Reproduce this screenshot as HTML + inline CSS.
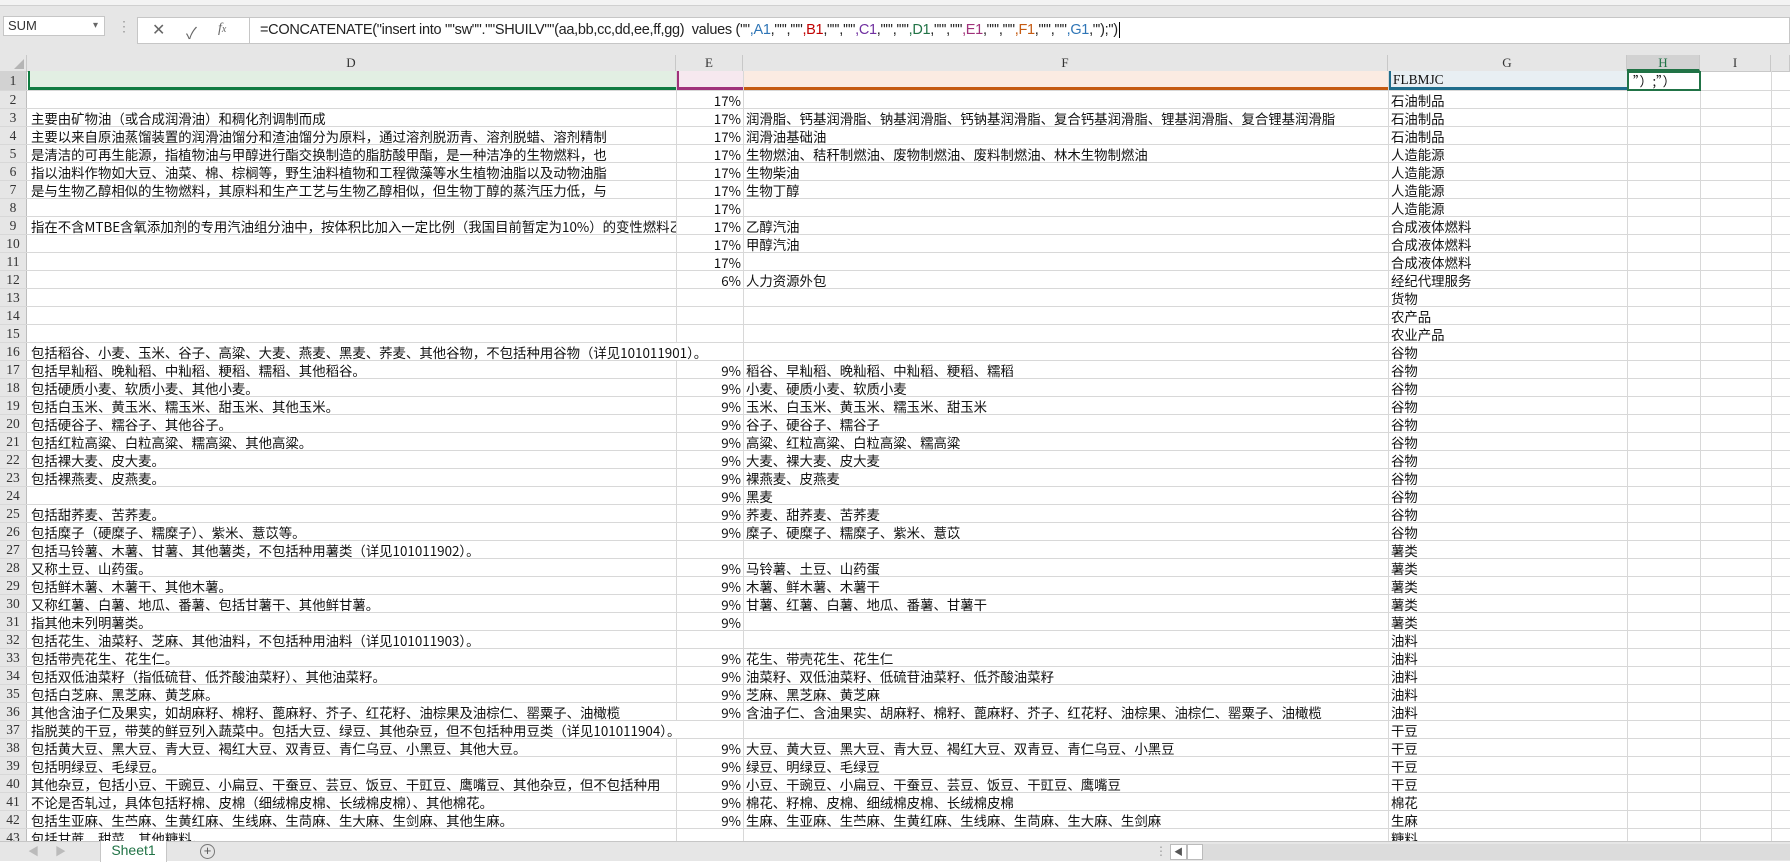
<!DOCTYPE html>
<html><head><meta charset="utf-8">
<style>
*{margin:0;padding:0;box-sizing:border-box}
body{width:1790px;height:861px;overflow:hidden;background:#fff;position:relative;font-family:"Liberation Sans","Noto Sans CJK SC",sans-serif}
.top{position:absolute;left:0;top:0;width:1790px;height:71px;background:#e6e6e6}
.rib{position:absolute;left:0;top:0;width:1790px;height:6px;background:#f3f3f3;border-bottom:1px solid #d0d0d0}
.nb{position:absolute;left:3px;top:16px;width:102px;height:20px;background:#fff;border:1px solid #c6c6c6;font-size:13px;line-height:18px;padding-left:4px;color:#333}
.nb:after{content:"▾";position:absolute;right:6px;top:0;font-size:10px;color:#666}
.ib{position:absolute;left:137px;top:17px;width:112px;height:27px;background:#fff;border:1px solid #c6c6c6;border-right:none;color:#666;font-size:16px}
.fb{position:absolute;left:249px;top:17px;width:1541px;height:27px;background:#fff;border:1px solid #c6c6c6;font-size:14.5px;line-height:25px;padding-left:10px;color:#222;white-space:nowrap;letter-spacing:-0.3px}
.grid{position:absolute;left:0;top:55px;width:1790px;height:786px;overflow:hidden}
.hdr{position:absolute;top:0;height:16px;font-family:"Liberation Serif","Noto Serif CJK SC",serif;font-size:13px;line-height:16px;text-align:center;color:#333;border-right:1px solid #c8c8c8;background:#e6e6e6}
.r{position:absolute;left:0;height:18px;width:1790px;font-family:"Noto Sans CJK SC",sans-serif;font-size:13.4px;line-height:18px;white-space:nowrap;color:#111;border-bottom:1px solid #d8d8d8}
.r span{position:absolute;top:0;height:17px;overflow:hidden}
.n{left:0;width:27px;background:#e6e6e6;text-align:center;font-family:"Liberation Serif",serif;font-size:13.5px;color:#333;border-right:1px solid #bdbdbd}
.d{left:28px;width:648px;padding-left:3px}
.dx{left:28px;padding-left:3px;overflow:visible!important;background:#fff;z-index:2}
.e{left:677px;width:66px;text-align:right;padding-right:2px}
.f{left:744px;width:644px;padding-left:2px}
.g{left:1389px;width:238px;padding-left:2px}
.vl{position:absolute;top:16px;width:1px;height:770px;background:#d8d8d8}
.tabs{position:absolute;left:0;top:841px;width:1790px;height:20px;background:#e6e6e6;border-top:1px solid #c6c6c6}
</style></head><body>
<div class="top"><div class="rib"></div>
<div class="nb">SUM</div>
<div style="position:absolute;left:117px;top:18px;color:#999;font-size:14px">⋮</div>
<div class="ib"><span style="position:absolute;left:14px;top:2px">✕</span><span style="position:absolute;left:48px;top:2px">✓</span><span style="position:absolute;left:80px;top:3px;font-family:'Liberation Serif',serif;font-style:italic;font-size:14px">f<span style="font-size:10px">x</span></span></div>
<div class="fb">=CONCATENATE("insert into ""sw"".""SHUILV""(aa,bb,cc,dd,ee,ff,gg)&nbsp; values (""<span style="color:#2e75b6">,A1</span>,""','""<span style="color:#c00000">,B1</span>,""','""<span style="color:#7030a0">,C1</span>,""','""<span style="color:#217346">,D1</span>,""','""<span style="color:#a0317a">,E1</span>,""','""<span style="color:#c55a11">,F1</span>,""','""<span style="color:#2e75b6">,G1</span>,"');")<span style="border-left:1px solid #000;margin-left:1px"></span></div>
</div>
<div class="grid">
<div style="position:absolute;left:0;top:0;width:27px;height:16px;background:#e6e6e6;border-right:1px solid #c8c8c8"><div style="position:absolute;right:2px;bottom:2px;width:0;height:0;border-left:10px solid transparent;border-bottom:10px solid #b5b5b5"></div></div>
<div class="hdr" style="left:27px;width:649px">D</div>
<div class="hdr" style="left:676px;width:67px">E</div>
<div class="hdr" style="left:743px;width:645px">F</div>
<div class="hdr" style="left:1388px;width:239px">G</div>
<div class="hdr" style="left:1627px;width:73px;background:#d2d2d2;color:#217346;border-bottom:2px solid #217346">H</div>
<div class="hdr" style="left:1700px;width:71px">I</div>
<div class="hdr" style="left:1771px;width:19px"></div>
<div style="position:absolute;left:0;top:16px;width:1790px;height:1px;background:#c8c8c8"></div>
<div class="vl" style="left:676px"></div><div class="vl" style="left:743px"></div><div class="vl" style="left:1388px"></div><div class="vl" style="left:1627px"></div><div class="vl" style="left:1700px"></div><div class="vl" style="left:1771px"></div>

<div class="r" style="top:16px;height:20px;line-height:20px">
<span class="n" style="height:19px;background:#d2d2d2">1</span>
<span style="left:28px;width:648px;height:19px;background:#e2efe3;border-bottom:3px solid #107c41;border-left:2px solid #107c41"></span>
<span style="left:677px;width:66px;height:19px;background:#f6e8ef;border-bottom:3px solid #a0317a;border-left:2px solid #a0317a"></span>
<span style="left:744px;width:644px;height:19px;background:#fbebe2;border-bottom:3px solid #c55a11"></span>
<span class="g" style="height:19px;background:#e8eff3;border-bottom:3px solid #1f6d8c;border-left:2px solid #1f6d8c;font-family:'Liberation Serif',serif;line-height:18px">FLBMJC</span>
<span style="left:1627px;width:74px;height:20px;border:2px solid #217346;padding-left:4px;font-size:13px;line-height:16px">”）;”）</span>
</div>
<div class="r" style="top:36px"><span class="n">2</span><span class="e">17%</span><span class="g">石油制品</span></div>
<div class="r" style="top:54px"><span class="n">3</span><span class="d">主要由矿物油（或合成润滑油）和稠化剂调制而成</span><span class="e">17%</span><span class="f">润滑脂、钙基润滑脂、钠基润滑脂、钙钠基润滑脂、复合钙基润滑脂、锂基润滑脂、复合锂基润滑脂</span><span class="g">石油制品</span></div>
<div class="r" style="top:72px"><span class="n">4</span><span class="d">主要以来自原油蒸馏装置的润滑油馏分和渣油馏分为原料，通过溶剂脱沥青、溶剂脱蜡、溶剂精制</span><span class="e">17%</span><span class="f">润滑油基础油</span><span class="g">石油制品</span></div>
<div class="r" style="top:90px"><span class="n">5</span><span class="d">是清洁的可再生能源，指植物油与甲醇进行酯交换制造的脂肪酸甲酯，是一种洁净的生物燃料，也</span><span class="e">17%</span><span class="f">生物燃油、秸秆制燃油、废物制燃油、废料制燃油、林木生物制燃油</span><span class="g">人造能源</span></div>
<div class="r" style="top:108px"><span class="n">6</span><span class="d">指以油料作物如大豆、油菜、棉、棕榈等，野生油料植物和工程微藻等水生植物油脂以及动物油脂</span><span class="e">17%</span><span class="f">生物柴油</span><span class="g">人造能源</span></div>
<div class="r" style="top:126px"><span class="n">7</span><span class="d">是与生物乙醇相似的生物燃料，其原料和生产工艺与生物乙醇相似，但生物丁醇的蒸汽压力低，与</span><span class="e">17%</span><span class="f">生物丁醇</span><span class="g">人造能源</span></div>
<div class="r" style="top:144px"><span class="n">8</span><span class="e">17%</span><span class="g">人造能源</span></div>
<div class="r" style="top:162px"><span class="n">9</span><span class="d">指在不含MTBE含氧添加剂的专用汽油组分油中，按体积比加入一定比例（我国目前暂定为10%）的变性燃料乙醇</span><span class="e">17%</span><span class="f">乙醇汽油</span><span class="g">合成液体燃料</span></div>
<div class="r" style="top:180px"><span class="n">10</span><span class="e">17%</span><span class="f">甲醇汽油</span><span class="g">合成液体燃料</span></div>
<div class="r" style="top:198px"><span class="n">11</span><span class="e">17%</span><span class="g">合成液体燃料</span></div>
<div class="r" style="top:216px"><span class="n">12</span><span class="e">6%</span><span class="f">人力资源外包</span><span class="g">经纪代理服务</span></div>
<div class="r" style="top:234px"><span class="n">13</span><span class="g">货物</span></div>
<div class="r" style="top:252px"><span class="n">14</span><span class="g">农产品</span></div>
<div class="r" style="top:270px"><span class="n">15</span><span class="g">农业产品</span></div>
<div class="r" style="top:288px"><span class="n">16</span><span class="dx">包括稻谷、小麦、玉米、谷子、高粱、大麦、燕麦、黑麦、荞麦、其他谷物，不包括种用谷物（详见101011901）。</span><span class="g">谷物</span></div>
<div class="r" style="top:306px"><span class="n">17</span><span class="d">包括早籼稻、晚籼稻、中籼稻、粳稻、糯稻、其他稻谷。</span><span class="e">9%</span><span class="f">稻谷、早籼稻、晚籼稻、中籼稻、粳稻、糯稻</span><span class="g">谷物</span></div>
<div class="r" style="top:324px"><span class="n">18</span><span class="d">包括硬质小麦、软质小麦、其他小麦。</span><span class="e">9%</span><span class="f">小麦、硬质小麦、软质小麦</span><span class="g">谷物</span></div>
<div class="r" style="top:342px"><span class="n">19</span><span class="d">包括白玉米、黄玉米、糯玉米、甜玉米、其他玉米。</span><span class="e">9%</span><span class="f">玉米、白玉米、黄玉米、糯玉米、甜玉米</span><span class="g">谷物</span></div>
<div class="r" style="top:360px"><span class="n">20</span><span class="d">包括硬谷子、糯谷子、其他谷子。</span><span class="e">9%</span><span class="f">谷子、硬谷子、糯谷子</span><span class="g">谷物</span></div>
<div class="r" style="top:378px"><span class="n">21</span><span class="d">包括红粒高粱、白粒高粱、糯高粱、其他高粱。</span><span class="e">9%</span><span class="f">高粱、红粒高粱、白粒高粱、糯高粱</span><span class="g">谷物</span></div>
<div class="r" style="top:396px"><span class="n">22</span><span class="d">包括裸大麦、皮大麦。</span><span class="e">9%</span><span class="f">大麦、裸大麦、皮大麦</span><span class="g">谷物</span></div>
<div class="r" style="top:414px"><span class="n">23</span><span class="d">包括裸燕麦、皮燕麦。</span><span class="e">9%</span><span class="f">裸燕麦、皮燕麦</span><span class="g">谷物</span></div>
<div class="r" style="top:432px"><span class="n">24</span><span class="e">9%</span><span class="f">黑麦</span><span class="g">谷物</span></div>
<div class="r" style="top:450px"><span class="n">25</span><span class="d">包括甜荞麦、苦荞麦。</span><span class="e">9%</span><span class="f">荞麦、甜荞麦、苦荞麦</span><span class="g">谷物</span></div>
<div class="r" style="top:468px"><span class="n">26</span><span class="d">包括糜子（硬糜子、糯糜子）、紫米、薏苡等。</span><span class="e">9%</span><span class="f">糜子、硬糜子、糯糜子、紫米、薏苡</span><span class="g">谷物</span></div>
<div class="r" style="top:486px"><span class="n">27</span><span class="d">包括马铃薯、木薯、甘薯、其他薯类，不包括种用薯类（详见101011902）。</span><span class="g">薯类</span></div>
<div class="r" style="top:504px"><span class="n">28</span><span class="d">又称土豆、山药蛋。</span><span class="e">9%</span><span class="f">马铃薯、土豆、山药蛋</span><span class="g">薯类</span></div>
<div class="r" style="top:522px"><span class="n">29</span><span class="d">包括鲜木薯、木薯干、其他木薯。</span><span class="e">9%</span><span class="f">木薯、鲜木薯、木薯干</span><span class="g">薯类</span></div>
<div class="r" style="top:540px"><span class="n">30</span><span class="d">又称红薯、白薯、地瓜、番薯、包括甘薯干、其他鲜甘薯。</span><span class="e">9%</span><span class="f">甘薯、红薯、白薯、地瓜、番薯、甘薯干</span><span class="g">薯类</span></div>
<div class="r" style="top:558px"><span class="n">31</span><span class="d">指其他未列明薯类。</span><span class="e">9%</span><span class="g">薯类</span></div>
<div class="r" style="top:576px"><span class="n">32</span><span class="d">包括花生、油菜籽、芝麻、其他油料，不包括种用油料（详见101011903）。</span><span class="g">油料</span></div>
<div class="r" style="top:594px"><span class="n">33</span><span class="d">包括带壳花生、花生仁。</span><span class="e">9%</span><span class="f">花生、带壳花生、花生仁</span><span class="g">油料</span></div>
<div class="r" style="top:612px"><span class="n">34</span><span class="d">包括双低油菜籽（指低硫苷、低芥酸油菜籽）、其他油菜籽。</span><span class="e">9%</span><span class="f">油菜籽、双低油菜籽、低硫苷油菜籽、低芥酸油菜籽</span><span class="g">油料</span></div>
<div class="r" style="top:630px"><span class="n">35</span><span class="d">包括白芝麻、黑芝麻、黄芝麻。</span><span class="e">9%</span><span class="f">芝麻、黑芝麻、黄芝麻</span><span class="g">油料</span></div>
<div class="r" style="top:648px"><span class="n">36</span><span class="d">其他含油子仁及果实，如胡麻籽、棉籽、蓖麻籽、芥子、红花籽、油棕果及油棕仁、罂粟子、油橄榄</span><span class="e">9%</span><span class="f">含油子仁、含油果实、胡麻籽、棉籽、蓖麻籽、芥子、红花籽、油棕果、油棕仁、罂粟子、油橄榄</span><span class="g">油料</span></div>
<div class="r" style="top:666px"><span class="n">37</span><span class="dx">指脱荚的干豆，带荚的鲜豆列入蔬菜中。包括大豆、绿豆、其他杂豆，但不包括种用豆类（详见101011904）。</span><span class="g">干豆</span></div>
<div class="r" style="top:684px"><span class="n">38</span><span class="d">包括黄大豆、黑大豆、青大豆、褐红大豆、双青豆、青仁乌豆、小黑豆、其他大豆。</span><span class="e">9%</span><span class="f">大豆、黄大豆、黑大豆、青大豆、褐红大豆、双青豆、青仁乌豆、小黑豆</span><span class="g">干豆</span></div>
<div class="r" style="top:702px"><span class="n">39</span><span class="d">包括明绿豆、毛绿豆。</span><span class="e">9%</span><span class="f">绿豆、明绿豆、毛绿豆</span><span class="g">干豆</span></div>
<div class="r" style="top:720px"><span class="n">40</span><span class="d">其他杂豆，包括小豆、干豌豆、小扁豆、干蚕豆、芸豆、饭豆、干豇豆、鹰嘴豆、其他杂豆，但不包括种用</span><span class="e">9%</span><span class="f">小豆、干豌豆、小扁豆、干蚕豆、芸豆、饭豆、干豇豆、鹰嘴豆</span><span class="g">干豆</span></div>
<div class="r" style="top:738px"><span class="n">41</span><span class="d">不论是否轧过，具体包括籽棉、皮棉（细绒棉皮棉、长绒棉皮棉）、其他棉花。</span><span class="e">9%</span><span class="f">棉花、籽棉、皮棉、细绒棉皮棉、长绒棉皮棉</span><span class="g">棉花</span></div>
<div class="r" style="top:756px"><span class="n">42</span><span class="d">包括生亚麻、生苎麻、生黄红麻、生线麻、生苘麻、生大麻、生剑麻、其他生麻。</span><span class="e">9%</span><span class="f">生麻、生亚麻、生苎麻、生黄红麻、生线麻、生苘麻、生大麻、生剑麻</span><span class="g">生麻</span></div>
<div class="r" style="top:774px"><span class="n">43</span><span class="d">包括甘蔗、甜菜、其他糖料。</span><span class="g">糖料</span></div>
</div>
<div class="tabs">
<span style="position:absolute;left:28px;top:1px;color:#bbb;font-size:11px">◀</span>
<span style="position:absolute;left:55px;top:1px;color:#bbb;font-size:11px">▶</span>
<div style="position:absolute;left:100px;top:-1px;width:67px;height:21px;background:#fff;border-left:1px solid #c6c6c6;border-right:1px solid #c6c6c6;color:#217346;font-size:14px;line-height:19px;text-align:center">Sheet1</div>
<div style="position:absolute;left:200px;top:2px;width:15px;height:15px;border:1px solid #777;border-radius:50%;color:#555;font-size:13px;line-height:12px;text-align:center">+</div>
<span style="position:absolute;left:1155px;top:2px;color:#999;font-size:12px">⋮</span>
<div style="position:absolute;left:1170px;top:2px;width:620px;height:16px;background:#dcdcdc"></div>
<div style="position:absolute;left:1170px;top:2px;width:17px;height:16px;background:#fff;border:1px solid #bbb;font-size:9px;color:#555;text-align:center;line-height:14px">◀</div>
<div style="position:absolute;left:1187px;top:2px;width:16px;height:16px;background:#fff;border:1px solid #bbb"></div>
</div>
</body></html>
